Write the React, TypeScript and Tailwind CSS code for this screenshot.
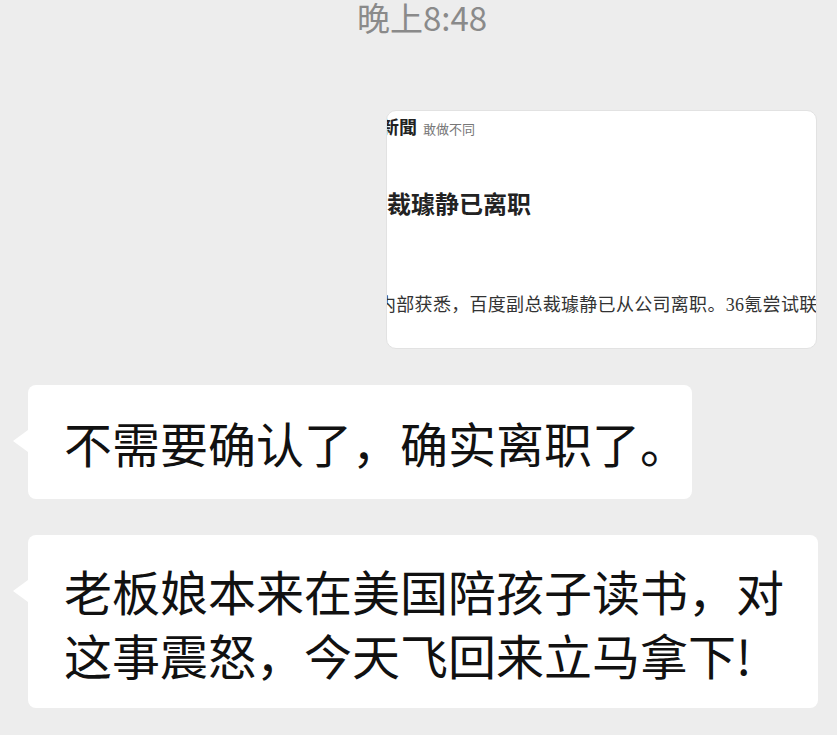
import React from "react";

const Bubble: React.FC<{ width: string; height: string; children: React.ReactNode }> = ({
  width,
  height,
  children,
}) => (
  <div className={`relative ml-[28px] bg-white rounded-[8px] flex items-center pl-[36px] ${width} ${height}`}>
    {/* tail */}
    <div className="absolute left-[-15px] top-[45px] w-0 h-0 border-y-[11px] border-y-transparent border-r-[15px] border-r-white" />
    <div className="text-[48px] leading-[64px] text-[#111] whitespace-nowrap">{children}</div>
  </div>
);

const NewsCard: React.FC = () => (
  <div className="ml-auto mr-[20px] w-[431px] h-[239px] bg-white rounded-[10px] border border-[#e2e2e2] overflow-hidden font-['Liberation_Serif','Noto_Sans_CJK_SC',serif]">
    <div className="mt-[6px] ml-[-6px] flex items-baseline gap-[6px] leading-[22px] whitespace-nowrap">
      <span className="text-[18px] font-bold text-[#222]">新聞</span>
      <span className="text-[13px] text-[#777]">敢做不同</span>
    </div>
    <div className="mt-[48px] text-[24px] leading-[28px] font-bold text-[#222] whitespace-nowrap font-['Noto_Sans_CJK_SC',sans-serif]">
      裁璩静已离职
    </div>
    <div className="mt-[76px] ml-[-9px] text-[18px] leading-[24px] tracking-[0.3px] text-[#333] whitespace-nowrap">
      内部获悉，百度副总裁璩静已从公司离职。36氪尝试联系
    </div>
  </div>
);

export default function App() {
  return (
    <div className="w-[837px] h-[735px] bg-[#ededed] overflow-hidden font-['Noto_Sans_CJK_SC','Noto_Sans',sans-serif]">
      <div className="h-[40px] pl-[7px] text-center text-[33px] leading-[34px] text-[#8a8a8a]">晚上8:48</div>
      <div className="mt-[70px]">
        <NewsCard />
      </div>
      <div className="mt-[36px]">
        <Bubble width="w-[664px]" height="h-[114px]">
          不需要确认了，确实离职了。
        </Bubble>
      </div>
      <div className="mt-[36px]">
        <Bubble width="w-[790px]" height="h-[173px]">
          老板娘本来在美国陪孩子读书，对
          <br />
          这事震怒，今天飞回来立马拿下!
        </Bubble>
      </div>
    </div>
  );
}
